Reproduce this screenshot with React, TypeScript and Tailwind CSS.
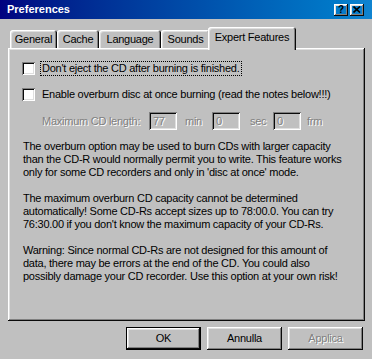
import React from "react";

const raised =
  "shadow-[inset_-1px_-1px_#0a0a0a,inset_1px_1px_#ffffff,inset_-2px_-2px_#808080,inset_2px_2px_#dfdfdf]";
const sunken =
  "shadow-[inset_1px_1px_#808080,inset_-1px_-1px_#ffffff,inset_2px_2px_#0a0a0a,inset_-2px_-2px_#dfdfdf]";
const disabledText = "text-[#808080] [text-shadow:1px_1px_0_#ffffff]";

function Tab({ label, w }: { label: string; w: string }) {
  return (
    <div
      className={`${w} h-[18px] flex items-center justify-center rounded-t-[3px] shadow-[inset_1px_1px_#ffffff,inset_-1px_0_#0a0a0a,inset_-2px_0_#808080,inset_2px_2px_#dfdfdf] pt-[1px]`}
    >
      {label}
    </div>
  );
}

function Checkbox() {
  return <div className={`w-[13px] h-[13px] bg-white shrink-0 ${sunken}`} />;
}

function Field({ value }: { value: string }) {
  return (
    <div className={`w-[28px] h-[18px] bg-[#c0c0c0] shrink-0 flex items-center pl-[4px] ${sunken}`}>
      <span className={disabledText}>{value}</span>
    </div>
  );
}

function Button({ label, def, disabled }: { label: string; def?: boolean; disabled?: boolean }) {
  if (def) {
    return (
      <div className="w-[75px] h-[23px] border border-black">
        <div className={`w-full h-full flex items-center justify-center ${raised}`}>{label}</div>
      </div>
    );
  }
  return (
    <div className={`w-[75px] h-[23px] flex items-center justify-center ${raised}`}>
      <span className={disabled ? disabledText : ""}>{label}</span>
    </div>
  );
}

export default function App() {
  return (
    <div className="w-[372px] h-[359px] bg-[#c0c0c0] flex flex-col overflow-hidden font-['Liberation_Sans',Arial,sans-serif] text-[11px] leading-[13px] tracking-[-0.25px] text-black">
      {/* Title bar */}
      <div className="h-[19px] shrink-0 flex items-center bg-gradient-to-r from-[#000080] to-[#1084d0] pl-[7px] pr-[8px]">
        <span className="text-white font-bold tracking-normal">Preferences</span>
        <div className="ml-auto flex gap-[2px]">
          <div className={`w-[14px] h-[12px] flex items-center justify-center ${raised}`}>
            <span className="font-bold text-[10px] leading-[10px] tracking-normal">?</span>
          </div>
          <div className={`w-[14px] h-[12px] flex items-center justify-center ${raised}`}>
            <svg width="8" height="7" viewBox="0 0 8 7">
              <path d="M0.5 0.5 L7 6.5 M7 0.5 L0.5 6.5" stroke="#000" strokeWidth="1.6" fill="none" />
            </svg>
          </div>
        </div>
      </div>

      {/* Tabs */}
      <div className="mt-[8px] h-[21px] flex items-end pl-[10px] shrink-0">
        <Tab label="General" w="w-[47px]" />
        <Tab label="Cache" w="w-[42px]" />
        <Tab label="Language" w="w-[62px]" />
        <Tab label="Sounds" w="w-[49px]" />
        <div className="relative z-10 -ml-[2px] w-[88px] h-[23px] -mb-[2px] pb-[3px] bg-[#c0c0c0] flex items-center justify-center rounded-t-[3px] shadow-[inset_1px_1px_#ffffff,inset_-1px_0_#0a0a0a,inset_-2px_0_#808080,inset_2px_2px_#dfdfdf]">
          Expert Features
        </div>
      </div>

      {/* Panel */}
      <div className={`ml-[8px] w-[357px] h-[273px] shrink-0 pt-[13px] pl-[14px] ${raised}`}>
        <div className="flex items-center h-[15px]">
          <Checkbox />
          <span className="ml-[5px] h-[15px] px-[1px] border border-dotted border-black flex items-center">
            Don't eject the CD after burning is finished.
          </span>
        </div>
        <div className="mt-[11px] flex items-center h-[15px]">
          <Checkbox />
          <span className="ml-[7px]">Enable overburn disc at once burning (read the notes below!!!)</span>
        </div>
        <div className="mt-[10px] flex items-center h-[18px] pl-[20px]">
          <span className={`w-[107px] ${disabledText}`}>Maximum CD length:</span>
          <Field value="77" />
          <span className={`w-[35px] pl-[8px] ${disabledText}`}>min</span>
          <Field value="0" />
          <span className={`w-[33px] pl-[10px] ${disabledText}`}>sec</span>
          <Field value="0" />
          <span className={`pl-[6px] ${disabledText}`}>frm</span>
        </div>
        <p className="mt-[10px] ml-[1px] whitespace-nowrap">
          The overburn option may be used to burn CDs with larger capacity
          <br />
          than the CD-R would normally permit you to write. This feature works
          <br />
          only for some CD recorders and only in 'disc at once' mode.
        </p>
        <p className="mt-[13px] ml-[1px] whitespace-nowrap">
          The maximum overburn CD capacity cannot be determined
          <br />
          automatically! Some CD-Rs accept sizes up to 78:00.0. You can try
          <br />
          76:30.00 if you don't know the maximum capacity of your CD-Rs.
        </p>
        <p className="mt-[13px] ml-[1px] whitespace-nowrap">
          Warning: Since normal CD-Rs are not designed for this amount of
          <br />
          data, there may be errors at the end of the CD. You could also
          <br />
          possibly damage your CD recorder. Use this option at your own risk!
        </p>
      </div>

      {/* Buttons */}
      <div className="mt-[6px] flex justify-end gap-[6px] pr-[9px]">
        <Button label="OK" def />
        <Button label="Annulla" />
        <Button label="Applica" disabled />
      </div>
    </div>
  );
}
